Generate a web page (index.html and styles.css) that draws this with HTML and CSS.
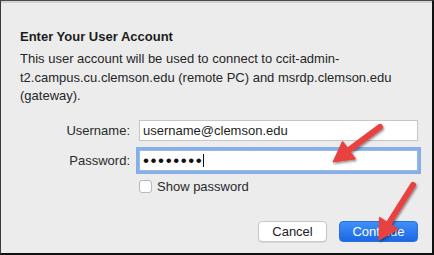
FILE: index.html
```html
<!DOCTYPE html>
<html>
<head>
<meta charset="utf-8">
<link rel="stylesheet" href="styles.css">
</head>
<body>
<div class="frame">
  <div class="dialog">
    <h1 class="title">Enter Your User Account</h1>
    <p class="desc">This user account will be used to connect to ccit-admin-t2.campus.cu.clemson.edu (remote PC) and msrdp.clemson.edu (gateway).</p>
    <div class="form">
      <label class="label">Username:</label>
      <div class="input">username@clemson.edu</div>
      <label class="label">Password:</label>
      <div class="input focus"><span class="dots">••••••••</span><span class="caret"></span></div>
      <div></div>
      <div class="check-row"><span class="checkbox"></span><span class="check-label">Show password</span></div>
    </div>
    <div class="buttons">
      <button class="btn cancel">Cancel</button>
      <button class="btn primary">Continue</button>
    </div>
  </div>
  <svg class="arrows" width="434" height="255" viewBox="0 0 434 255">
    <defs>
      <filter id="sh" x="-20%" y="-20%" width="140%" height="140%">
        <feDropShadow dx="1" dy="1.5" stdDeviation="1.2" flood-color="#000" flood-opacity="0.45"/>
      </filter>
    </defs>
    <g filter="url(#sh)" fill="#e8423f" stroke="#e8423f">
      <line x1="380" y1="127" x2="349" y2="150" stroke-width="6" stroke-linecap="round"/>
      <polygon points="333,162 355.6,158.9 342.5,141.3" stroke-width="1" stroke-linejoin="round"/>
      <line x1="413" y1="185" x2="389" y2="223" stroke-width="6" stroke-linecap="round"/>
      <polygon points="379,240 398,229 379.4,217.2" stroke-width="1" stroke-linejoin="round"/>
    </g>
  </svg>
</div>
</body>
</html>
```

FILE: styles.css
```css
html, body {
  margin: 0;
  padding: 0;
}
body {
  width: 434px;
  height: 255px;
  overflow: hidden;
  font-family: "Liberation Sans", Arial, sans-serif;
  color: #222;
}
.frame {
  position: relative;
  box-sizing: border-box;
  width: 434px;
  height: 255px;
  border-top: 1px solid #4a4a4a;
  border-left: 1px solid #3a3a3a;
  border-right: 2px solid #111;
  border-bottom: 2px solid #111;
  background: #ececec;
}
.dialog {
  box-sizing: border-box;
  height: 100%;
  border-top: 2px solid #d2d2d2;
  padding: 26px 0 0 19px;
  display: flex;
  flex-direction: column;
}
.title {
  margin: 0;
  font-size: 13px;
  line-height: 16px;
  font-weight: bold;
  color: #1c1c1c;
}
.desc {
  margin: 5px 0 0;
  width: 400px;
  font-size: 13px;
  line-height: 18.5px;
  color: #262626;
}
.form {
  margin-top: 14px;
  display: grid;
  grid-template-columns: 110px 279px;
  column-gap: 9px;
  row-gap: 9px;
  align-items: center;
}
.label {
  text-align: right;
  font-size: 13px;
  color: #2a2a2a;
}
.input {
  box-sizing: border-box;
  height: 21px;
  background: #fff;
  border: 1px solid #c6c6c6;
  font-size: 13px;
  line-height: 19px;
  padding-left: 3px;
  color: #1e1e1e;
  display: flex;
  align-items: center;
}
.input.focus {
  border-color: #9db9e6;
  box-shadow: 0 0 0 3px #86aee9;
}
.dots {
  font-size: 17px;
  letter-spacing: 1.6px;
  line-height: 19px;
  color: #111;
}
.caret {
  width: 1px;
  height: 13px;
  background: #111;
}
.check-row {
  display: flex;
  align-items: center;
  gap: 5px;
  margin-top: -1px;
}
.checkbox {
  box-sizing: border-box;
  width: 13px;
  height: 13px;
  background: #fff;
  border: 1px solid #b9b9b9;
  border-radius: 3px;
}
.check-label {
  font-size: 13px;
  color: #2a2a2a;
}
.buttons {
  margin-top: 27px;
  padding-right: 14px;
  display: flex;
  justify-content: flex-end;
  gap: 12px;
}
.btn {
  box-sizing: border-box;
  height: 21px;
  font-family: "Liberation Sans", Arial, sans-serif;
  font-size: 13px;
  border-radius: 4px;
  padding: 0;
}
.cancel {
  width: 69px;
  background: #fff;
  border: 1px solid #c8c8c8;
  color: #222;
  box-shadow: 0 1px 1px rgba(0,0,0,0.08);
}
.primary {
  width: 79px;
  background: linear-gradient(#3f8ff8, #1c68e6);
  border: 1px solid #2a6fe0;
  color: #fff;
  font-weight: 500;
}
.arrows {
  position: absolute;
  left: -1px;
  top: -1px;
  pointer-events: none;
}
```
